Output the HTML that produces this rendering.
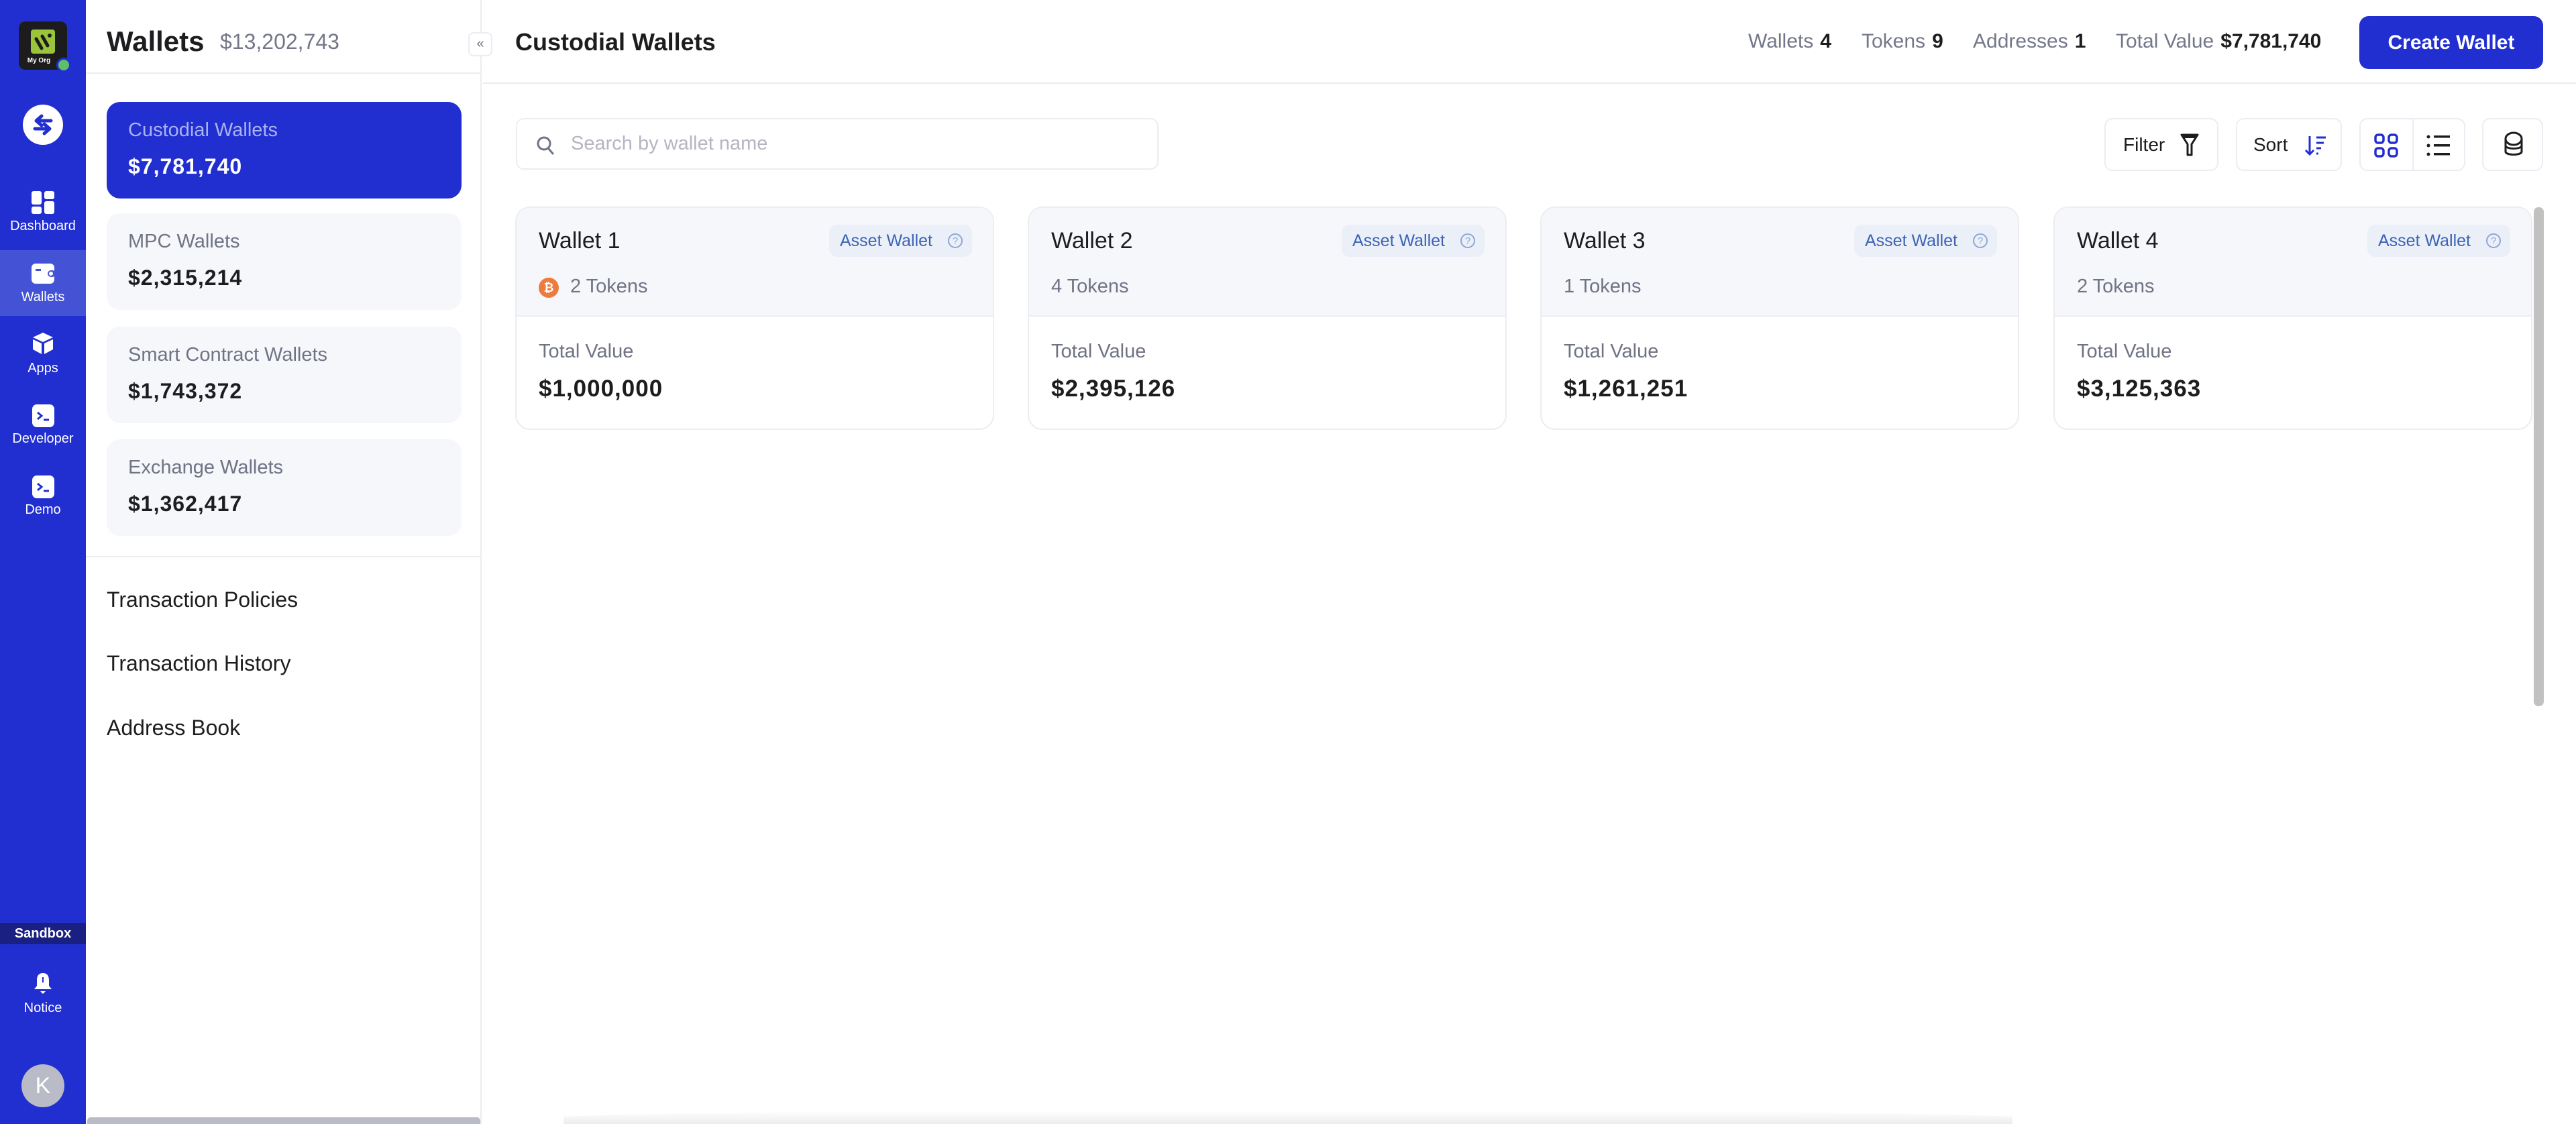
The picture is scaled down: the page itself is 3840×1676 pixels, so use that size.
<!DOCTYPE html>
<html><head><meta charset="utf-8"><style>
*{box-sizing:border-box;margin:0;padding:0}
body{width:3840px;height:1676px;overflow:hidden;background:#fff;font-family:"Liberation Sans",sans-serif;position:relative;color:#1d1d1f}
.a{position:absolute}
.rail{left:0;top:0;width:128px;height:1676px;background:#222fd0}
.rl{position:absolute;left:0;width:128px;text-align:center;color:#fff;font-size:20px}
.panel{left:128px;top:0;width:590px;height:1676px;border-right:2px solid #ececf2;background:#fff}
.wc{position:absolute;left:31px;width:529px;height:144px;border-radius:20px;background:#f6f7fb}
.wc .n{position:absolute;left:32px;top:26px;font-size:29px;color:#6f7384}
.wc .v{position:absolute;left:32px;top:78px;font-size:32px;font-weight:bold;color:#1d1d1f;letter-spacing:1px}
.nav{position:absolute;left:31px;font-size:32px;color:#1d1d1f}
.st{font-size:30px;color:#747789}
.st b{color:#1d1d1f;margin-left:10px}
.btn{position:absolute;top:176px;height:79px;border:2px solid #ececf2;border-radius:12px;background:#fff}
.card{position:absolute;top:308px;width:714px;height:333px;border:2px solid #ececf2;border-radius:22px;overflow:hidden;background:#fff}
.card .h{position:absolute;left:0;top:0;right:0;height:162px;background:#f6f7fb;border-bottom:2px solid #ececf2}
.card .t{position:absolute;left:33px;top:30px;font-size:34px;color:#1d1d1f}
.card .b{position:absolute;right:31px;top:25px;height:48px;width:213px;border-radius:12px;background:#ebeff8;color:#3b63b5;font-size:25px;line-height:48px;padding-left:16px}
.card .b i{position:absolute;right:14px;top:13px;width:22px;height:22px;border:2px solid #8fa6d6;border-radius:50%;font-style:normal;font-size:15px;line-height:19px;text-align:center;color:#8fa6d6}
.card .k{position:absolute;left:33px;top:101px;font-size:29px;color:#6f7384}
.card .l{position:absolute;left:33px;top:198px;font-size:29px;color:#6f7384}
.card .v{position:absolute;left:33px;top:250px;font-size:35px;font-weight:bold;color:#1d1d1f;letter-spacing:1px}
</style></head><body>

<div class="a rail">
  <div class="a" style="left:28px;top:32px;width:72px;height:72px;background:#1c1c1c;border-radius:10px">
    <div class="a" style="left:18px;top:12px;width:36px;height:36px;background:#9ac43a;border-radius:4px">
      <svg width="36" height="36" viewBox="0 0 36 36"><path d="M8 14 L16 28 M17 10 L25 24" stroke="#1c1c1c" stroke-width="5" stroke-linecap="round"/><circle cx="28" cy="9" r="3" fill="#1c1c1c"/></svg>
    </div>
    <div class="a" style="left:0;top:53px;width:60px;text-align:center;color:#fff;font-size:10px;font-weight:bold">My Org</div>
    <div class="a" style="left:56px;top:54px;width:22px;height:22px;border-radius:50%;background:#5cbf6b;border:3px solid #222fd0"></div>
  </div>
  <div class="a" style="left:34px;top:156px;width:60px;height:60px;border-radius:50%;background:#fff">
    <svg width="60" height="60" viewBox="0 0 60 60"><path d="M42 24 H22 M28 17 L20 24 L28 31" stroke="#222fd0" stroke-width="5" fill="none" stroke-linecap="round" stroke-linejoin="round"/><path d="M18 36 H38 M32 29 L40 36 L32 43" stroke="#222fd0" stroke-width="5" fill="none" stroke-linecap="round" stroke-linejoin="round"/></svg>
  </div>
  <svg class="a" style="left:47px;top:285px" width="34" height="34" viewBox="0 0 34 34"><rect x="0" y="0" width="15" height="20" rx="3" fill="#fff"/><rect x="19" y="0" width="15" height="12" rx="3" fill="#fff"/><rect x="0" y="23" width="15" height="11" rx="3" fill="#fff"/><rect x="19" y="15" width="15" height="19" rx="3" fill="#fff"/></svg>
  <div class="rl" style="top:326px">Dashboard</div>
  <div class="a" style="left:0;top:373px;width:128px;height:98px;background:#4452d6"></div>
  <svg class="a" style="left:47px;top:393px" width="36" height="30" viewBox="0 0 36 30"><rect x="0" y="0" width="34" height="30" rx="6" fill="#fff"/><rect x="6" y="8" width="8" height="3" fill="#4452d6"/><rect x="24" y="10" width="12" height="10" rx="5" fill="#4452d6"/><circle cx="29" cy="15" r="3" fill="#fff"/></svg>
  <div class="rl" style="top:432px">Wallets</div>
  <svg class="a" style="left:48px;top:495px" width="32" height="34" viewBox="0 0 32 34"><path d="M16 1 L31 8 L16 15 L1 8 Z" fill="#fff"/><path d="M1 11 L14 17 V33 L1 26 Z" fill="#fff"/><path d="M31 11 L18 17 V33 L31 26 Z" fill="#fff"/></svg>
  <div class="rl" style="top:538px">Apps</div>
  <svg class="a" style="left:48px;top:603px" width="33" height="34" viewBox="0 0 33 34"><rect width="33" height="34" rx="7" fill="#fff"/><path d="M8 12 L14 17 L8 22" stroke="#222fd0" stroke-width="3" fill="none"/><path d="M17 23 H25" stroke="#222fd0" stroke-width="3"/></svg>
  <div class="rl" style="top:643px">Developer</div>
  <svg class="a" style="left:48px;top:709px" width="33" height="34" viewBox="0 0 33 34"><rect width="33" height="34" rx="7" fill="#fff"/><path d="M8 12 L14 17 L8 22" stroke="#222fd0" stroke-width="3" fill="none"/><path d="M17 23 H25" stroke="#222fd0" stroke-width="3"/></svg>
  <div class="rl" style="top:749px">Demo</div>
  <div class="a" style="left:0;top:1376px;width:128px;height:32px;background:#1a1f82;color:#fff;font-size:20px;font-weight:bold;text-align:center;line-height:32px">Sandbox</div>
  <svg class="a" style="left:49px;top:1450px" width="30" height="34" viewBox="0 0 30 34"><path d="M15 1 C8 1 6 6 6 12 V20 L2 25 H28 L24 20 V12 C24 6 22 1 15 1 Z" fill="#fff"/><rect x="14" y="7" width="2" height="8" fill="#222fd0"/><path d="M11 28 H19 L15 32 Z" fill="#fff"/></svg>
  <div class="rl" style="top:1492px">Notice</div>
  <div class="a" style="left:0;top:1612px;width:128px;height:2px;background:#4452d6;display:none"></div>
  <div class="a" style="left:32px;top:1587px;width:64px;height:64px;border-radius:50%;background:#b9bcc6;color:#fff;font-size:34px;text-align:center;line-height:64px">K</div>
</div>

<div class="a panel">
  <div class="a" style="left:31px;top:38px;font-size:42px;font-weight:bold;color:#1d1d1f">Wallets</div>
  <div class="a" style="left:200px;top:44px;font-size:32px;color:#747789">$13,202,743</div>
  <div class="a" style="left:0;top:108px;width:590px;height:2px;background:#ececf2"></div>
  <div class="wc" style="top:152px;background:#222fd0"><div class="n" style="color:#aab2f2">Custodial Wallets</div><div class="v" style="color:#fff">$7,781,740</div></div>
  <div class="wc" style="top:318px"><div class="n">MPC Wallets</div><div class="v">$2,315,214</div></div>
  <div class="wc" style="top:487px"><div class="n">Smart Contract Wallets</div><div class="v">$1,743,372</div></div>
  <div class="wc" style="top:655px"><div class="n">Exchange Wallets</div><div class="v">$1,362,417</div></div>
  <div class="a" style="left:0;top:829px;width:590px;height:2px;background:#ececf2"></div>
  <div class="nav" style="top:876px">Transaction Policies</div>
  <div class="nav" style="top:971px">Transaction History</div>
  <div class="nav" style="top:1067px">Address Book</div>
  <div class="a" style="left:2px;top:1666px;width:586px;height:10px;background:#b9bcc6;border-radius:5px 5px 0 0"></div>
</div>
<div class="a" style="left:698px;top:48px;width:36px;height:36px;border:2px solid #ececf2;border-radius:8px;background:#fff;color:#6f7384;font-size:20px;text-align:center;line-height:30px">«</div>

<div class="a" style="left:720px;top:123px;width:3120px;height:2px;background:#ececf2"></div>
<div class="a" style="left:768px;top:42px;font-size:36px;font-weight:bold">Custodial Wallets</div>
<div class="a st" style="left:2606px;top:45px">Wallets<b>4</b></div>
<div class="a st" style="left:2775px;top:45px">Tokens<b>9</b></div>
<div class="a st" style="left:2941px;top:45px">Addresses<b>1</b></div>
<div class="a st" style="left:3154px;top:45px">Total Value<b>$7,781,740</b></div>
<div class="a" style="left:3517px;top:24px;width:274px;height:79px;background:#222fd0;border-radius:14px;color:#fff;font-size:30px;font-weight:bold;text-align:center;line-height:79px">Create Wallet</div>

<div class="a" style="left:769px;top:176px;width:958px;height:77px;border:2px solid #ececf2;border-radius:12px">
  <svg class="a" style="left:28px;top:24px" width="28" height="30" viewBox="0 0 28 30"><circle cx="12" cy="12" r="9" stroke="#6f7384" stroke-width="3" fill="none"/><path d="M19 20 L25 27" stroke="#6f7384" stroke-width="3" stroke-linecap="round"/></svg>
  <div class="a" style="left:80px;top:20px;font-size:29px;color:#b4b6c2">Search by wallet name</div>
</div>

<div class="btn" style="left:3137px;width:170px"><span class="a" style="left:26px;top:22px;font-size:28px">Filter</span>
<svg class="a" style="left:110px;top:20px" width="30" height="38" viewBox="0 0 30 38"><path d="M3 3 H27 L18 17 V33 L12 33 V17 Z" stroke="#1d1d1f" stroke-width="3" fill="none" stroke-linejoin="round"/><path d="M3 3 H27 L24 8 H6 Z" fill="#1d1d1f"/></svg></div>
<div class="btn" style="left:3333px;width:158px"><span class="a" style="left:24px;top:22px;font-size:28px">Sort</span>
<svg class="a" style="left:100px;top:22px" width="34" height="34" viewBox="0 0 34 34"><path d="M8 3 V30 M2 24 L8 30 L14 24" stroke="#222fd0" stroke-width="3" fill="none"/><path d="M18 5 H32 M18 13 H29 M18 21 H25 M18 29 H21" stroke="#222fd0" stroke-width="3"/></svg></div>
<div class="btn" style="left:3517px;width:158px"><div class="a" style="left:77px;top:0;width:2px;height:75px;background:#ececf2"></div>
<svg class="a" style="left:20px;top:21px" width="36" height="36" viewBox="0 0 36 36"><g stroke="#222fd0" stroke-width="3.5" fill="none"><rect x="2" y="2" width="12" height="12" rx="4"/><rect x="22" y="2" width="12" height="12" rx="4"/><rect x="2" y="22" width="12" height="12" rx="4"/><rect x="22" y="22" width="12" height="12" rx="4"/></g></svg>
<svg class="a" style="left:98px;top:21px" width="36" height="36" viewBox="0 0 36 36"><g fill="#1d1d1f"><circle cx="3" cy="5" r="2.5"/><circle cx="3" cy="18" r="2.5"/><circle cx="3" cy="31" r="2.5"/><rect x="11" y="3" width="24" height="3.5"/><rect x="11" y="16" width="24" height="3.5"/><rect x="11" y="29" width="24" height="3.5"/></g></svg></div>
<div class="btn" style="left:3700px;width:91px">
<svg class="a" style="left:30px;top:18px" width="30" height="42" viewBox="0 0 30 42"><g stroke="#1d1d1f" stroke-width="3" fill="none"><ellipse cx="15" cy="11" rx="12" ry="9"/><path d="M3 11 V30 C3 36 27 36 27 30 V11"/><path d="M3 21 C3 27 27 27 27 21"/><path d="M3 30 C3 36 27 36 27 30"/></g></svg></div>

<div class="card" style="left:768px"><div class="h"></div><div class="t">Wallet 1</div><div class="b">Asset Wallet<i>?</i></div>
<div class="a" style="left:33px;top:104px;width:30px;height:30px;border-radius:50%;background:#ef7a3e;color:#fff;font-size:18px;font-weight:bold;text-align:center;line-height:30px">₿</div>
<div class="k" style="left:80px">2 Tokens</div><div class="l">Total Value</div><div class="v">$1,000,000</div></div>
<div class="card" style="left:1532px"><div class="h"></div><div class="t">Wallet 2</div><div class="b">Asset Wallet<i>?</i></div><div class="k">4 Tokens</div><div class="l">Total Value</div><div class="v">$2,395,126</div></div>
<div class="card" style="left:2296px"><div class="h"></div><div class="t">Wallet 3</div><div class="b">Asset Wallet<i>?</i></div><div class="k">1 Tokens</div><div class="l">Total Value</div><div class="v">$1,261,251</div></div>
<div class="card" style="left:3061px"><div class="h"></div><div class="t">Wallet 4</div><div class="b">Asset Wallet<i>?</i></div><div class="k">2 Tokens</div><div class="l">Total Value</div><div class="v">$3,125,363</div></div>

<div class="a" style="left:3777px;top:309px;width:15px;height:744px;background:#c1c1c1;border-radius:7px"></div>
<div class="a" style="left:840px;top:1656px;width:2160px;height:20px;background:linear-gradient(#fff,#ededed);border-radius:50% 50% 0 0"></div>
</body></html>
